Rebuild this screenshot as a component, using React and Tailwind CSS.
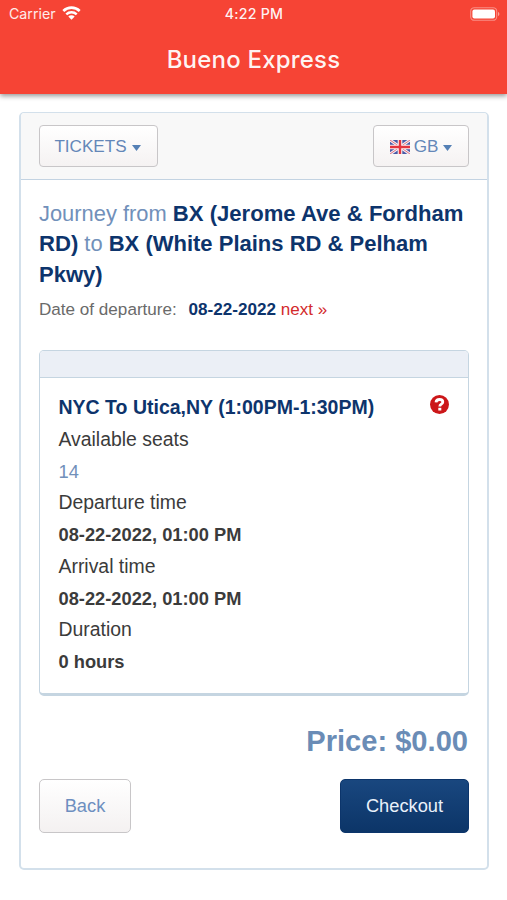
const details = [
  { label: 'Departure time', value: '08-22-2022, 01:00 PM' },
  { label: 'Arrival time', value: '08-22-2022, 01:00 PM' },
  { label: 'Duration', value: '0 hours' },
];

function WifiIcon() {
  return (
    <svg className="ml-[6px] h-[14px] w-[19px]" viewBox="0 0 19 14" fill="none">
      <path d="M1.3 4.9a12 12 0 0 1 16.4 0" stroke="#fff" strokeWidth="2.7" />
      <path d="M4.3 8.3a7.6 7.6 0 0 1 10.4 0" stroke="#fff" strokeWidth="2.5" />
      <path d="M9.5 13.8 6.3 10.6a4.6 4.6 0 0 1 6.4 0z" fill="#fff" />
    </svg>
  );
}

function BatteryIcon() {
  return (
    <svg className="h-[14px] w-[31px]" viewBox="0 0 31 14">
      <rect x="0.7" y="0.7" width="26" height="12.6" rx="3.6" fill="none" stroke="#fff" strokeOpacity="0.4" strokeWidth="1.1" />
      <rect x="2.4" y="2.4" width="22.6" height="9.2" rx="2" fill="#fff" />
      <path d="M28 5c1.8.5 1.8 3.5 0 4z" fill="#fff" fillOpacity="0.5" />
    </svg>
  );
}

function Flag() {
  return (
    <svg className="mr-[4px] h-[14px] w-[20px]" viewBox="0 0 20 14">
      <rect width="20" height="14" fill="#4a5ba6" />
      <path d="M0 0l20 14M20 0L0 14" stroke="#f3eef5" strokeWidth="3" />
      <path d="M0 0l20 14M20 0L0 14" stroke="#e0707c" strokeWidth="1" />
      <path d="M10 0v14M0 7h20" stroke="#fbf3f5" strokeWidth="4.6" />
      <path d="M10 0v14M0 7h20" stroke="#e5343f" strokeWidth="2.4" />
    </svg>
  );
}

function Caret() {
  return (
    <svg className="mt-[1px] ml-[5px] h-[6px] w-[9px]" viewBox="0 0 9 6">
      <path d="M0 0h9L4.5 6z" fill="#5580b5" />
    </svg>
  );
}

function HelpIcon() {
  return (
    <svg className="mt-[3px] size-[19px]" viewBox="0 0 19 19">
      <circle cx="9.5" cy="9.5" r="9.5" fill="#cc1719" />
      <path d="M6 7.3C6.2 5.4 7.5 4.5 9.5 4.5c2 0 3.3 1 3.3 2.6 0 2.2-3 2-3 4.3" fill="none" stroke="#fff" strokeWidth="2.8" />
      <rect x="8.3" y="12.8" width="3" height="2.7" fill="#fff" />
    </svg>
  );
}

export default function App() {
  return (
    <div className="h-[900px] w-[507px] overflow-hidden bg-white font-['Liberation_Sans',Arial,sans-serif]">
      <header className="h-[94px] bg-[#f64435] font-['Inter',sans-serif] text-white shadow-[0_2px_5px_rgba(0,0,0,0.42)]">
        <div className="grid h-[27px] grid-cols-3 items-center pr-[8px] pl-[9px] text-[14.2px]">
          <div className="flex items-center text-white/90">
            Carrier
            <WifiIcon />
          </div>
          <div className="pt-px text-center font-medium tracking-[0.2px] text-white/95">4:22 PM</div>
          <div className="-mr-[2px] flex justify-end">
            <BatteryIcon />
          </div>
        </div>
        <h1 className="pt-[15px] text-center text-[24px] leading-[36px] font-medium tracking-[0.2px] text-white/95">Bueno Express</h1>
      </header>

      <main className="mt-[18px] mr-[18px] ml-[19px] h-[758px] rounded-[5px] border-2 border-t border-[#d3e0eb]">
        <div className="flex h-[67px] items-start justify-between rounded-t-[4px] border-b border-[#c3d3e2] bg-[#f8f8f8] px-[18px] pt-[12px] text-[17.1px] text-[#6487b8]">
          <button className="flex h-[42px] w-[119px] items-center justify-center rounded-[4px] border-[1.5px] border-[#c8c6c8] bg-linear-to-b from-white to-[#f5f2f2] pt-[2px] pr-[2px]">
            TICKETS
            <Caret />
          </button>
          <button className="flex h-[42px] w-[96px] items-center justify-center rounded-[4px] border-[1.5px] border-[#c8c6c8] bg-linear-to-b from-white to-[#f5f2f2] pt-[2px]">
            <Flag />
            GB
            <Caret />
          </button>
        </div>

        <div className="px-[18px] pt-[19px]">
          <h2 className="text-[21.9px] leading-[30.4px] text-[#7190ba]">
            Journey from <b className="text-[22.1px] text-[#0d346c]">BX (Jerome Ave &amp; Fordham RD)</b> to{' '}
            <b className="text-[22px] text-[#0d346c]">BX (White Plains RD &amp; Pelham Pkwy)</b>
          </h2>
          <p className="mt-[6.8px] text-[17.1px] leading-[26px] text-[#6a6a6a]">
            Date of departure: <b className="ml-[7px] text-[#0d346c]">08-22-2022</b>{' '}
            <a className="text-[#d32a2c]">next »</a>
          </p>

          <section className="mt-[27px] h-[346px] rounded-[5px] border-[1.5px] border-b-[3px] border-[#c5d5e1] bg-white">
            <div className="h-[27px] rounded-t-[4px] border-b border-[#c5d5e1] bg-[#ebeff6]" />
            <div className="pt-[14px] pr-[19px] pl-[18.5px] leading-[31.75px] text-[#3b3b3b]">
              <div className="flex justify-between">
                <h3 className="text-[19.5px] font-bold text-[#0d346c]">NYC To Utica,NY (1:00PM-1:30PM)</h3>
                <HelpIcon />
              </div>
              <div className="text-[19.4px]">Available seats</div>
              <div className="text-[18.3px] text-[#7190ba]">14</div>
              {details.map((item) => (
                <div key={item.label}>
                  <div className="text-[19.4px]">{item.label}</div>
                  <div className="text-[18.3px] font-bold">{item.value}</div>
                </div>
              ))}
            </div>
          </section>

          <div className="mt-[25px] pr-px text-right text-[29.1px] leading-[40px] font-bold text-[#6a8cb6]">Price: $0.00</div>
          <div className="mt-[18px] flex justify-between text-[18.3px]">
            <button className="h-[54px] w-[92px] rounded-[5px] border-[1.5px] border-[#c8c6c8] bg-linear-to-b from-white to-[#f4f1f1] text-[#6d8fc0]">
              Back
            </button>
            <button className="h-[54px] w-[129px] rounded-[5px] border border-[#0c356b] bg-linear-to-b from-[#19477f] to-[#0c3568] text-[#eaf1fa]">
              Checkout
            </button>
          </div>
        </div>
      </main>
    </div>
  );
}
